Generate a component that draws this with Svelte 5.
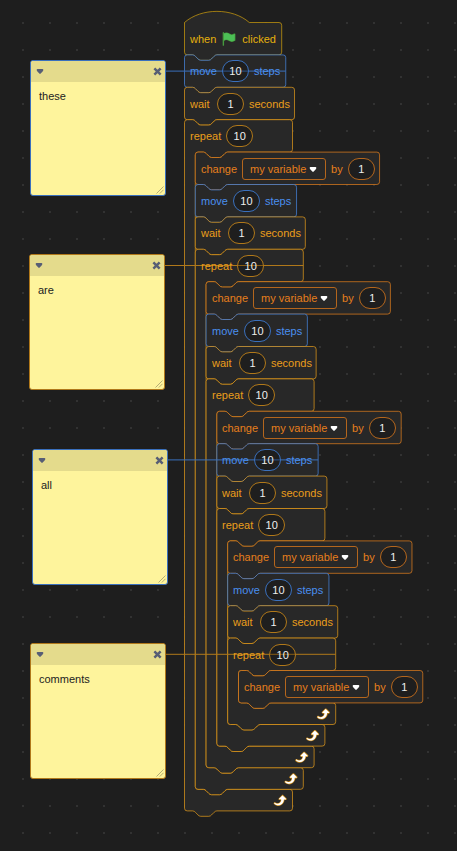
<script>
  // Shapes are described in block units and drawn at the workspace zoom.
  const ZOOM = 0.675;
  const ORIGIN = { x: 184.5, y: 54.9 };
  const ROW = 48;
  const FOOT = 32;
  const INDENT = 16;
  const DEPTH = 5;

  const WIDTHS = { hat: 144, move: 150, wait: 163, repeat: 160, change: 273 };
  const KINDS = {
    hat: 'events',
    move: 'motion',
    wait: 'control',
    repeat: 'control',
    change: 'data'
  };

  const NOTCH = 'c 2 0 3 1 4 2 l 4 4 c 1 1 2 2 4 2 h 12 c 2 0 3 -1 4 -2 l 4 -4 c 1 -1 2 -2 4 -2';
  const NOTCH_BACK = 'c -2 0 -3 1 -4 2 l -4 4 c -1 1 -2 2 -4 2 h -12 c -2 0 -3 -1 -4 -2 l -4 -4 c -1 -1 -2 -2 -4 -2';

  function outline(type, w, inner) {
    const top = `M 0 4 a 4 4 0 0 1 4 -4 H 12 ${NOTCH} H ${w - 4} a 4 4 0 0 1 4 4`;
    const bottom = `a 4 4 0 0 1 -4 4 H 48 ${NOTCH_BACK} H 4 a 4 4 0 0 1 -4 -4 Z`;
    if (type === 'hat') {
      return `M 0 0 c 25 -22 71 -22 96 0 H ${w - 4} a 4 4 0 0 1 4 4 v 40 ${bottom}`;
    }
    if (type === 'repeat') {
      return `${top} v 40 a 4 4 0 0 1 -4 4 H 64 ${NOTCH_BACK} H 20 a 4 4 0 0 0 -4 4 v ${inner - 8} a 4 4 0 0 0 4 4 H 28 ${NOTCH} H ${w - 4} a 4 4 0 0 1 4 4 v 24 ${bottom}`;
    }
    return `${top} v 40 ${bottom}`;
  }

  // Height of everything held inside the loop at a given level.
  const innerHeight = (level) =>
    level === DEPTH - 1 ? ROW : ROW * 4 + FOOT + innerHeight(level + 1);

  const blocks = [];
  function add(type, level, y, inner = 0) {
    const w = WIDTHS[type];
    const x = level * INDENT;
    blocks.push({
      id: blocks.length,
      type,
      kind: KINDS[type],
      x,
      y,
      w,
      inner,
      path: outline(type, w, inner),
      left: Math.floor(ORIGIN.x + x * ZOOM),
      top: Math.ceil(ORIGIN.y + y * ZOOM)
    });
  }

  add('hat', 0, -ROW);
  let cursor = 0;
  for (let level = 0; level < DEPTH; level++) {
    if (level > 0) {
      add('change', level, cursor);
      cursor += ROW;
    }
    add('move', level, cursor);
    add('wait', level, cursor + ROW);
    add('repeat', level, cursor + 2 * ROW, innerHeight(level));
    cursor += 3 * ROW;
  }
  add('change', DEPTH, cursor);

  const pick = (type, index) => blocks.filter((b) => b.type === type)[index];
  const comments = [
    { text: 'these', x: 30, y: 60, block: pick('move', 0) },
    { text: 'are', x: 29, y: 254, block: pick('repeat', 1) },
    { text: 'all', x: 32, y: 449, block: pick('move', 3) },
    { text: 'comments', x: 30, y: 643, block: pick('repeat', 4) }
  ].map((c) => ({
    ...c,
    kind: c.block.kind,
    lineY: ORIGIN.y + (c.block.y + ROW / 2) * ZOOM,
    lineEnd: ORIGIN.x + (c.block.x + c.block.w) * ZOOM
  }));
</script>

<main class="workspace">
  <svg class="layer" aria-hidden="true">
    <defs>
      <pattern id="grid" width="27" height="27" patternUnits="userSpaceOnUse">
        <rect x="22" y="22" width="2" height="2" fill="#323232" />
      </pattern>
    </defs>
    <rect width="100%" height="100%" fill="url(#grid)" />
    <g transform="translate({ORIGIN.x} {ORIGIN.y}) scale({ZOOM})">
      {#each blocks as b (b.id)}
        <g transform="translate({b.x} {b.y})">
          <path class="shape {b.kind}" d={b.path} />
          {#if b.type === 'repeat'}
            <g transform="translate({b.w - 32} {ROW + b.inner + 4})">
              <path fill="#cf8b17" d="M23.3,11c-0.3,0.6-0.9,1-1.5,1h-1.6c-0.1,1.3-0.5,2.5-1.1,3.6c-0.9,1.7-2.3,3.2-4.1,4.1c-1.7,0.9-3.6,1.2-5.5,0.9c-1.8-0.3-3.5-1.1-4.9-2.3c-0.7-0.7-0.7-1.9,0-2.6c0.6-0.6,1.6-0.7,2.3-0.2H7c0.9,0.6,1.9,0.9,2.9,0.9s1.9-0.3,2.7-0.9c1.1-0.8,1.8-2.1,1.8-3.5h-1.5c-0.9,0-1.7-0.7-1.7-1.7c0-0.4,0.2-0.9,0.5-1.2l4.4-4.4c0.7-0.6,1.7-0.6,2.4,0L23,9.2C23.5,9.7,23.6,10.4,23.3,11z" />
              <path fill="#ffffff" d="M21.8,11h-2.6c0,1.5-0.3,2.9-1,4.2c-0.8,1.6-2.1,2.8-3.7,3.6c-1.5,0.8-3.3,1.1-4.9,0.8c-1.6-0.2-3.2-1-4.4-2.1c-0.4-0.3-0.4-0.9-0.1-1.2c0.3-0.4,0.9-0.4,1.2-0.1l0,0c1,0.7,2.2,1.1,3.4,1.1s2.3-0.3,3.3-1c0.9-0.6,1.6-1.5,2-2.6c0.3-0.9,0.4-1.8,0.2-2.8h-2.4c-0.4,0-0.7-0.3-0.7-0.7c0-0.2,0.1-0.3,0.2-0.4l4.4-4.4c0.3-0.3,0.7-0.3,0.9,0L22,9.8c0.3,0.3,0.4,0.6,0.3,0.9S22,11,21.8,11z" />
            </g>
          {/if}
        </g>
      {/each}
    </g>
    {#each comments as c}
      <line class="link {c.kind}" x1={c.x + 136} x2={c.lineEnd} y1={c.lineY} y2={c.lineY} />
    {/each}
  </svg>

  {#each blocks as b (b.id)}
    <div class="block {b.kind}" style="left: {b.left}px; top: {b.top}px">
      {#if b.type === 'hat'}
        <span>when</span>
        <svg class="flag" viewBox="0 0 24 24" role="img" aria-label="green flag">
          <path fill="#45993d" d="M20.8,3.7c-0.4-0.2-0.9-0.1-1.2,0.2c-2,1.6-4.8,1.6-6.8,0c-2.3-1.9-5.6-2.3-8.3-1v-0.4c0-0.6-0.5-1-1-1s-1,0.4-1,1v18.8c0,0.5,0.5,1,1,1h0.1c0.5,0,1-0.5,1-1v-6.4c1-0.7,2.1-1.2,3.4-1.3c1.2,0,2.4,0.4,3.4,1.2c2.9,2.3,7,2.3,9.8,0c0.3-0.2,0.4-0.5,0.4-0.9V4.7C21.6,4.2,21.3,3.8,20.8,3.7z" />
          <path fill="#4cbf56" d="M20.6,4.8l-0.1,9.1v0c-2.5,2-6.1,2-8.6,0.1c-1.1-0.9-2.5-1.4-4-1.4c-1.2,0.1-2.3,0.5-3.4,1.1V4c2.5-1.4,5.5-1.1,7.7,0.6C14.6,6.4,18,6.4,20.4,4.5h0C20.5,4.6,20.6,4.7,20.6,4.8z" />
        </svg>
        <span>clicked</span>
      {:else if b.type === 'move'}
        <label for="n{b.id}">move</label>
        <input class="number" id="n{b.id}" inputmode="numeric" value="10" />
        <span>steps</span>
      {:else if b.type === 'wait'}
        <label for="n{b.id}">wait</label>
        <input class="number" id="n{b.id}" inputmode="numeric" value="1" />
        <span>seconds</span>
      {:else if b.type === 'repeat'}
        <label for="n{b.id}">repeat</label>
        <input class="number" id="n{b.id}" inputmode="numeric" value="10" />
      {:else}
        <label for="v{b.id}">change</label>
        <div class="variable">
          <select id="v{b.id}"><option>my variable</option></select>
          <svg class="arrow" viewBox="0 0 14 10" aria-hidden="true">
            <path d="M2 0H12C14 0 14 2.500 13 4L8.500 9Q7 10 5.500 9L1 4C0 2.500 0 0 2 0Z" />
          </svg>
        </div>
        <label for="n{b.id}">by</label>
        <input class="number" id="n{b.id}" inputmode="numeric" value="1" />
      {/if}
    </div>
  {/each}

  {#each comments as c}
    <section class="comment {c.kind}" style="left: {c.x}px; top: {c.y}px">
      <header>
        <button aria-label="Collapse comment">
          <svg class="arrow" viewBox="0 0 14 10" aria-hidden="true">
            <path d="M2 0H12C14 0 14 2.500 13 4L8.500 9Q7 10 5.500 9L1 4C0 2.500 0 0 2 0Z" />
          </svg>
        </button>
        <button aria-label="Delete comment">
          <svg class="cross" viewBox="0 0 8 8" aria-hidden="true">
            <path d="M1.200 1.200L6.800 6.800M6.800 1.200L1.200 6.800" />
          </svg>
        </button>
      </header>
      <textarea aria-label="Comment" spellcheck="false" value={c.text}></textarea>
      <svg class="grip" viewBox="0 0 8 8" aria-hidden="true">
        <path d="M0.500 7.500L7.500 0.500M3.800 7.500L7.500 3.800" />
      </svg>
    </section>
  {/each}
</main>

<style>
  :global(body) {
    margin: 0;
    background: #1e1e1e;
  }

  .workspace {
    position: relative;
    min-height: 100vh;
    overflow: hidden;
    background: #1e1e1e;
    font: 11px/13px 'Liberation Sans', Arial, sans-serif;
  }

  .events { --ink: #e6b10c; --edge: #d9a60a; --rim: #a5800f; }
  .motion { --ink: #4a8fee; --edge: #4a8ff0; --rim: #3a70bd; }
  .control { --ink: #ea9e1b; --edge: #f0a21a; --rim: #b0781a; }
  .data { --ink: #e67f1c; --edge: #f0841c; --rim: #b4661d; }

  .layer {
    position: absolute;
    inset: 0;
    width: 100%;
    height: 100%;
    pointer-events: none;
  }

  .shape {
    fill: #282828;
    stroke: var(--edge);
    stroke-width: 1;
  }

  .link {
    stroke: var(--rim);
    stroke-width: 1;
  }

  .block {
    position: absolute;
    display: flex;
    align-items: center;
    gap: 5px;
    height: 32px;
    padding-left: 6px;
    color: var(--ink);
    white-space: nowrap;
  }

  .block label:first-child {
    min-width: 22px;
  }

  input,
  select,
  textarea,
  button {
    box-sizing: border-box;
    margin: 0;
    padding: 0;
    border: 0;
    outline: 0;
    background: none;
    color: inherit;
    font: inherit;
    appearance: none;
  }

  .number {
    width: 27px;
    height: 22px;
    border: 1px solid var(--rim);
    border-radius: 11px;
    background: rgba(0, 0, 0, 0.24);
    color: #eeeeee;
    text-align: center;
  }

  .flag {
    width: 16px;
    height: 16px;
  }

  .variable {
    position: relative;
    display: flex;
  }

  select {
    width: 84px;
    height: 22px;
    padding-left: 7px;
    border: 1px solid var(--rim);
    border-radius: 3px;
    background: #282828;
    color: var(--ink);
  }

  .arrow {
    display: block;
    width: 8px;
    height: 5px;
    fill: #575e75;
  }

  .variable .arrow {
    position: absolute;
    top: 9px;
    right: 9px;
    fill: #ffffff;
    pointer-events: none;
  }

  .comment {
    position: absolute;
    box-sizing: border-box;
    display: flex;
    flex-direction: column;
    width: 136px;
    height: 136px;
    overflow: hidden;
    border: 1px solid var(--rim);
    border-radius: 3px;
    background: #fef49c;
    color: #222222;
  }

  .comment header {
    display: flex;
    align-items: center;
    justify-content: space-between;
    height: 21px;
    padding: 0 3px 0 5px;
    background: #e4db8c;
  }

  .comment textarea {
    flex: 1;
    padding: 8px;
    resize: none;
  }

  .cross {
    display: block;
    width: 9px;
    height: 9px;
    fill: none;
    stroke: #575e75;
    stroke-width: 2.2;
  }

  .grip {
    position: absolute;
    right: 1px;
    bottom: 1px;
    width: 8px;
    height: 8px;
    fill: none;
    stroke: #b5ae76;
    stroke-width: 1;
  }
</style>
